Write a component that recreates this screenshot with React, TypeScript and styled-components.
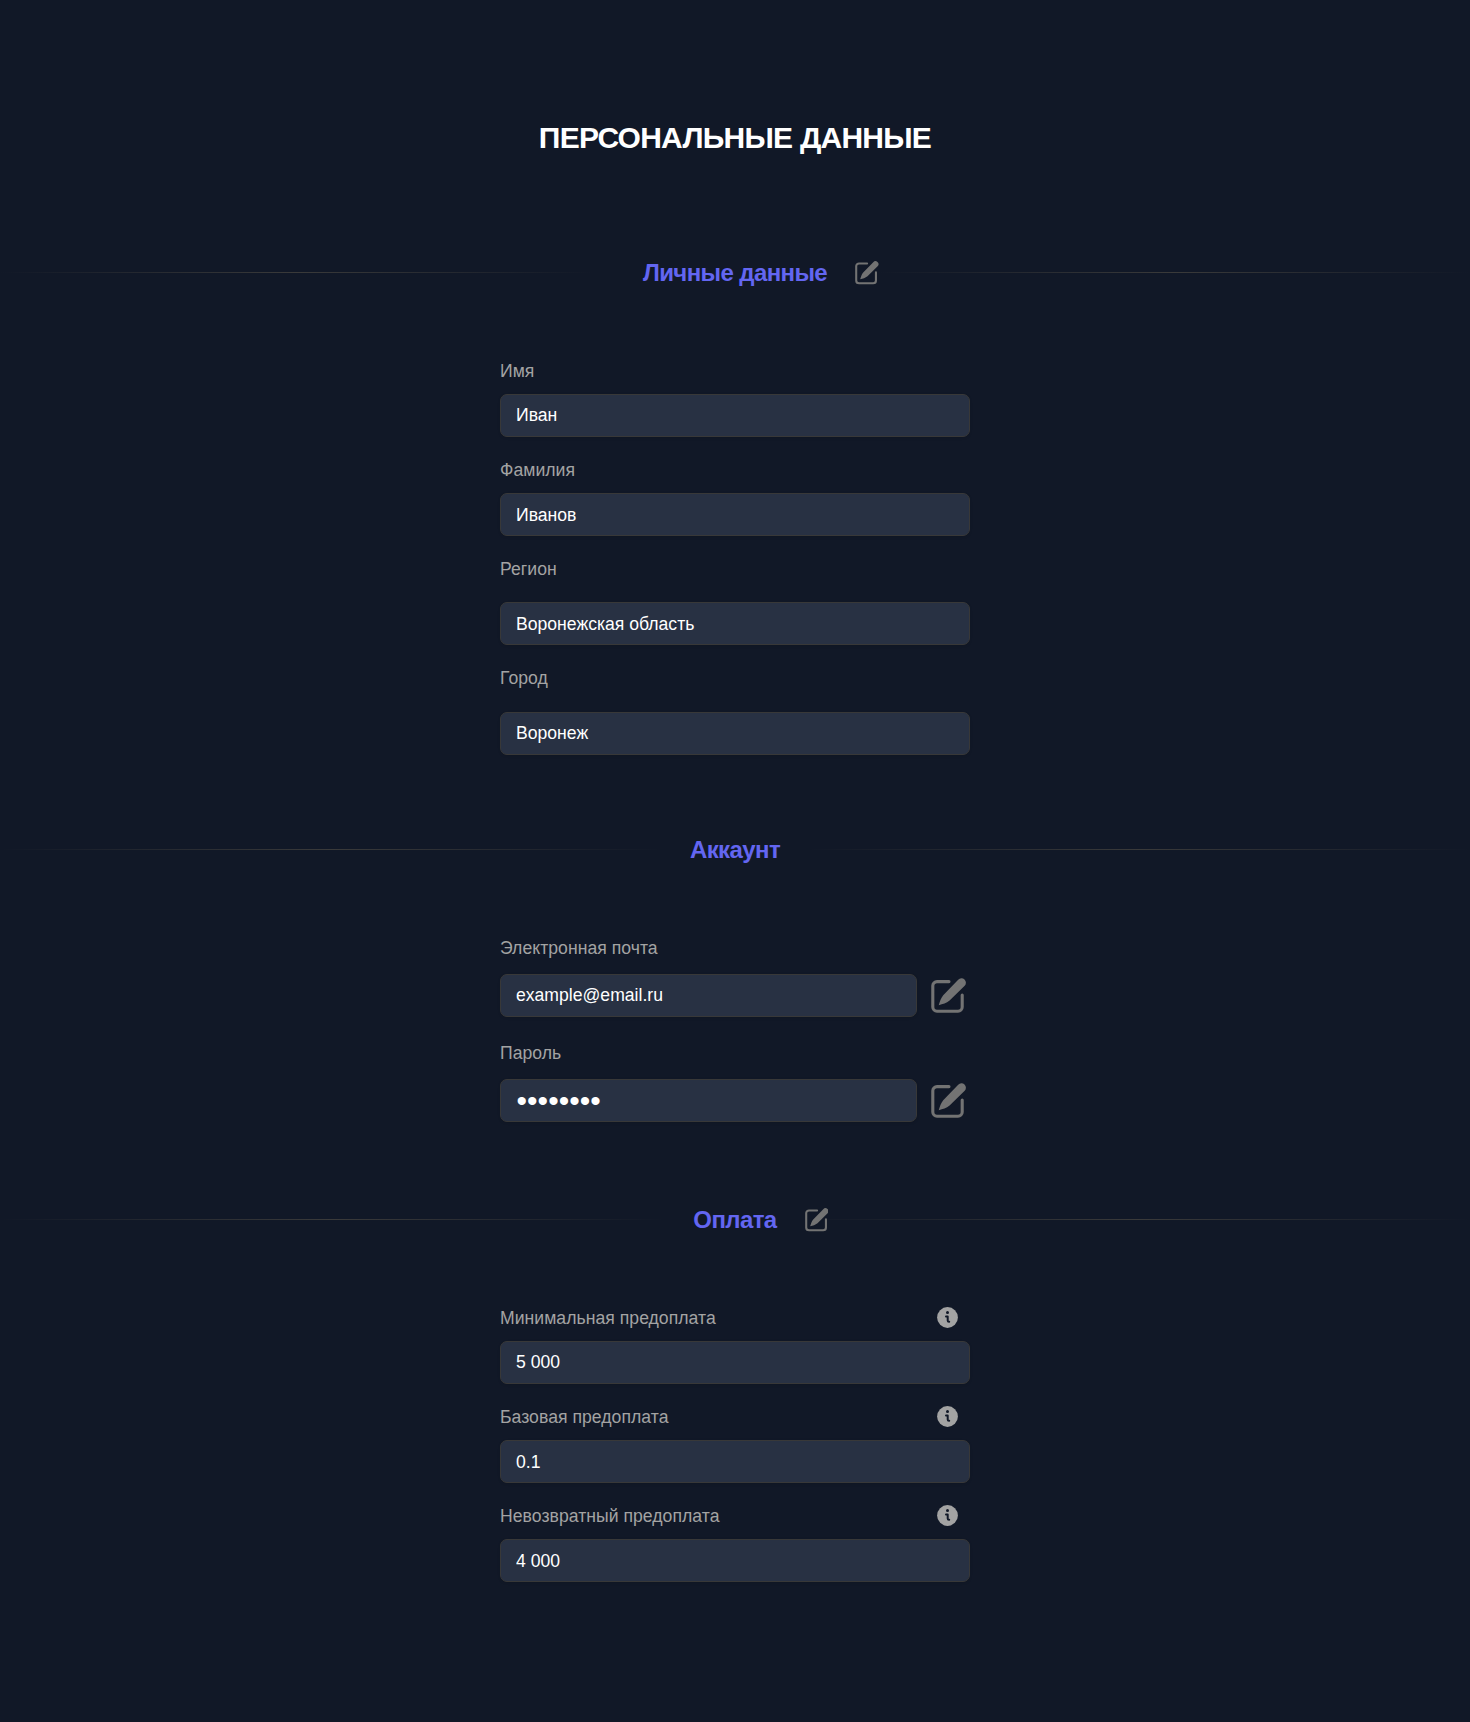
import React from "react";
import styled, { createGlobalStyle } from "styled-components";

const GlobalStyle = createGlobalStyle`
  *, *::before, *::after { box-sizing: border-box; }
  body {
    margin: 0;
    background: #111827;
    font-family: "Liberation Sans", Arial, sans-serif;
  }
`;

const Page = styled.main`
  display: flex;
  flex-direction: column;
  align-items: center;
  min-height: 1722px;
  padding-top: 120px;
  background: #111827;
`;

const Title = styled.h1`
  margin: 0;
  font-size: 30px;
  line-height: 36px;
  font-weight: 700;
  letter-spacing: -0.75px;
  color: #fff;
`;

const Section = styled.section<{ $top: number }>`
  width: 100%;
  margin-top: ${(p) => p.$top}px;
`;

const Heading = styled.div<{ $gap: number }>`
  display: grid;
  grid-template-columns: 1fr auto 1fr;
  grid-template-rows: 32px;
  align-items: center;
  column-gap: ${(p) => p.$gap}px;
  height: 32px;
`;

const Rule = styled.span`
  height: 1px;
  background: linear-gradient(90deg, transparent, #3a3a3a, transparent);
`;

const HeadingLabel = styled.div`
  position: relative;
  padding-top: 2px;
`;

const HeadingText = styled.h2`
  margin: 0;
  font-size: 24px;
  line-height: 32px;
  font-weight: 700;
  letter-spacing: -0.6px;
  color: #6366f1;
`;

const HeadingAction = styled.span`
  position: absolute;
  left: calc(100% + 28px);
  top: 6px;
  display: flex;
`;

const Form = styled.form`
  display: flex;
  flex-direction: column;
  width: 470px;
  margin: 69px auto 0;
`;

const Field = styled.div<{ $gap: number; $top?: number }>`
  display: flex;
  flex-direction: column;
  gap: ${(p) => p.$gap}px;
  margin-top: ${(p) => p.$top ?? 0}px;
`;

const LabelRow = styled.div`
  display: flex;
  align-items: center;
  justify-content: space-between;
  height: 28px;
  padding-right: 12px;
`;

const Label = styled.label`
  font-size: 17.6px;
  line-height: 28px;
  letter-spacing: 0.04px;
  color: #a3a3a3;
`;

const InputRow = styled.div`
  display: flex;
  align-items: center;
  gap: 14px;
`;

const Input = styled.input<{ $low?: boolean }>`
  flex: 1;
  min-width: 0;
  height: 43px;
  padding: ${(p) => (p.$low ? 2 : 0)}px 15px 0;
  border: 1px solid #383838;
  border-radius: 7px;
  outline: none;
  background: #283143;
  box-shadow: 0 1px 3px rgba(0, 0, 0, 0.1);
  color: #fff;
  font-family: inherit;
  font-size: 17.6px;

  &[type="password"] {
    font-size: 30px;
    letter-spacing: 0.04px;
    padding-left: 15.5px;
  }
`;

const IconSlot = styled.span`
  display: flex;
  width: 39px;
`;

const InfoSlot = styled.span`
  display: flex;
  margin-bottom: 1px;
`;

function EditIcon({ size }: { size: number }) {
  return (
    <svg width={size} height={size} viewBox="0 0 35 35" fill="none">
      <path
        d="M18 3.6H6A4.2 4.2 0 0 0 1.8 7.8V29A4.2 4.2 0 0 0 6 33.2H27A4.2 4.2 0 0 0 31.2 29V17"
        stroke="#737373"
        strokeWidth="3.1"
        strokeLinecap="round"
      />
      <path
        d="M7.7 27.2C9 23.5 9.6 20.4 12.2 17.2L27.2 1.7A4.4 4.4 0 0 1 33.7 7.8L18.6 22.6C15.4 25.2 11.8 26.2 7.7 27.2Z"
        fill="#737373"
      />
    </svg>
  );
}

function InfoIcon() {
  return (
    <svg width="21" height="21" viewBox="0 0 21 21" fill="none">
      <circle cx="10.5" cy="10.5" r="10.4" fill="#a3a3a3" />
      <circle cx="10.5" cy="5.5" r="1.5" fill="#111827" />
      <path
        d="M9 9.5H10.7V13.5A1.3 1.3 0 0 0 12 14.8H12.2"
        stroke="#111827"
        strokeWidth="2"
        strokeLinecap="round"
        strokeLinejoin="round"
      />
    </svg>
  );
}

interface HeadingProps {
  text: string;
  gap?: number;
  editable?: boolean;
}

function SectionHeading({ text, gap = 28, editable }: HeadingProps) {
  return (
    <Heading $gap={gap}>
      <Rule />
      <HeadingLabel>
        <HeadingText>{text}</HeadingText>
        {editable && (
          <HeadingAction>
            <EditIcon size={23.5} />
          </HeadingAction>
        )}
      </HeadingLabel>
      <Rule />
    </Heading>
  );
}

interface FieldProps {
  label: string;
  value: string;
  gap?: number;
  top?: number;
  type?: string;
  low?: boolean;
  info?: boolean;
  editable?: boolean;
}

function FormField({ label, value, gap = 9, top, type = "text", low, info, editable }: FieldProps) {
  return (
    <Field $gap={gap} $top={top}>
      <LabelRow>
        <Label>{label}</Label>
        {info && (
          <InfoSlot>
            <InfoIcon />
          </InfoSlot>
        )}
      </LabelRow>
      <InputRow>
        <Input type={type} value={value} $low={low} readOnly />
        {editable && (
          <IconSlot>
            <EditIcon size={35} />
          </IconSlot>
        )}
      </InputRow>
    </Field>
  );
}

export default function App() {
  return (
    <>
      <GlobalStyle />
      <Page>
        <Title>ПЕРСОНАЛЬНЫЕ ДАННЫЕ</Title>
        <Section $top={100}>
          <SectionHeading text="Личные данные" gap={50} editable />
          <Form>
            <FormField label="Имя" value="Иван" />
            <FormField label="Фамилия" value="Иванов" top={19} low />
            <FormField label="Регион" value="Воронежская область" gap={19} top={19} low />
            <FormField label="Город" value="Воронеж" gap={20} top={19} />
          </Form>
        </Section>
        <Section $top={78}>
          <SectionHeading text="Аккаунт" />
          <Form>
            <FormField label="Электронная почта" value="example@email.ru" gap={12} editable />
            <FormField label="Пароль" value="password" type="password" gap={12} top={22} editable />
          </Form>
        </Section>
        <Section $top={81}>
          <SectionHeading text="Оплата" editable />
          <Form>
            <FormField label="Минимальная предоплата" value="5 000" info />
            <FormField label="Базовая предоплата" value="0.1" top={19} low info />
            <FormField label="Невозвратный предоплата" value="4 000" top={19} low info />
          </Form>
        </Section>
      </Page>
    </>
  );
}
